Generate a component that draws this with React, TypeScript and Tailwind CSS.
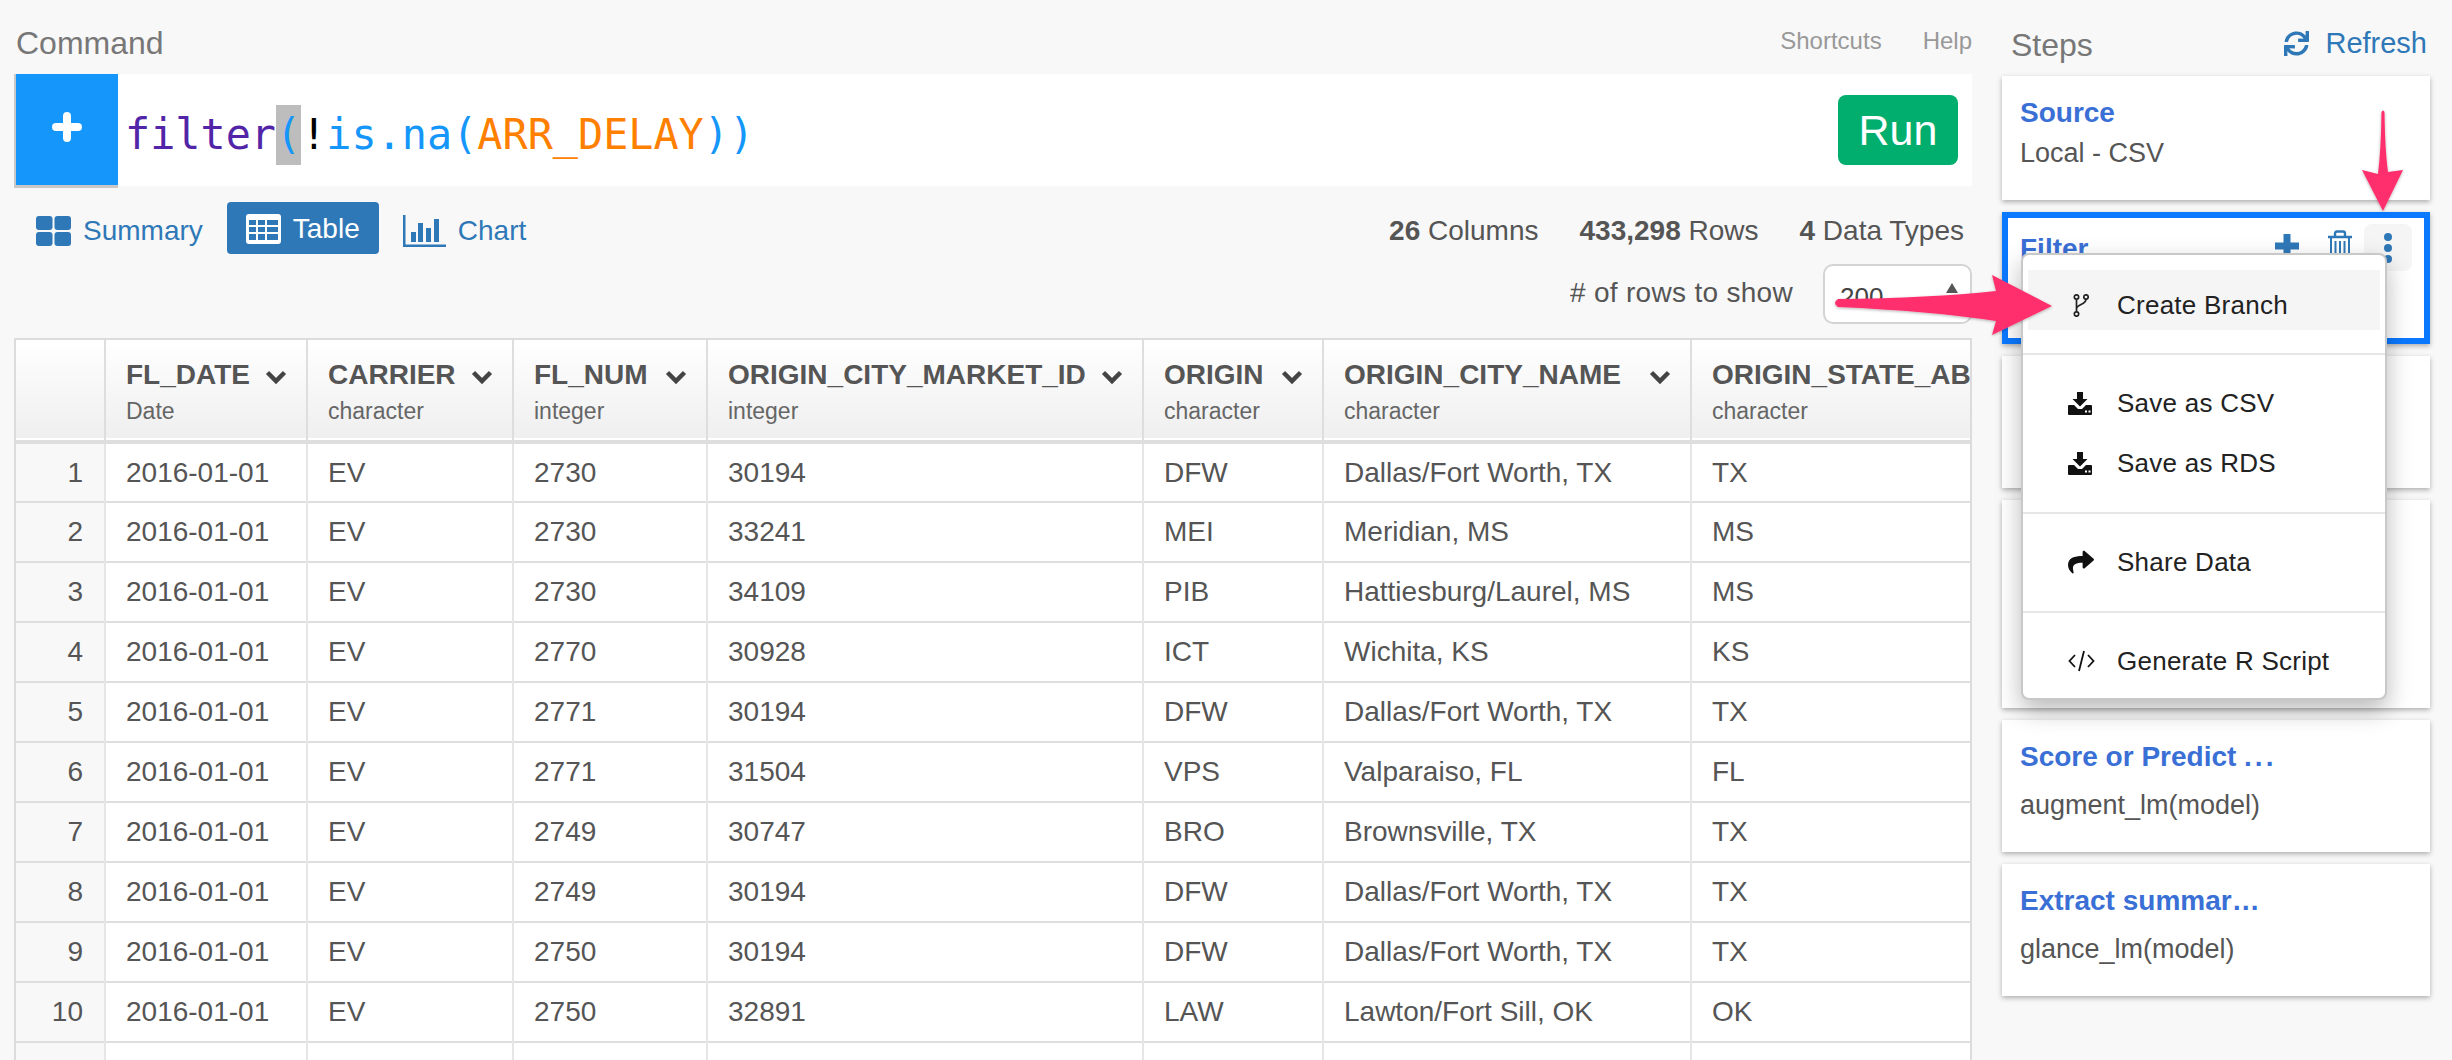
import React from "react";
import { FaSync, FaShare } from "react-icons/fa";

const SANS = "font-['Liberation_Sans',Arial,sans-serif]";
const columns = [
  { w: "w-[202px]", name: "FL_DATE", type: "Date" },
  { w: "w-[206px]", name: "CARRIER", type: "character" },
  { w: "w-[194px]", name: "FL_NUM", type: "integer" },
  { w: "w-[436px]", name: "ORIGIN_CITY_MARKET_ID", type: "integer" },
  { w: "w-[180px]", name: "ORIGIN", type: "character" },
  { w: "w-[368px]", name: "ORIGIN_CITY_NAME", type: "character" },
  { w: "w-[400px]", name: "ORIGIN_STATE_AB", type: "character" },
];
const rows = [
  ["2730", "30194", "DFW", "Dallas/Fort Worth, TX", "TX"],
  ["2730", "33241", "MEI", "Meridian, MS", "MS"],
  ["2730", "34109", "PIB", "Hattiesburg/Laurel, MS", "MS"],
  ["2770", "30928", "ICT", "Wichita, KS", "KS"],
  ["2771", "30194", "DFW", "Dallas/Fort Worth, TX", "TX"],
  ["2771", "31504", "VPS", "Valparaiso, FL", "FL"],
  ["2749", "30747", "BRO", "Brownsville, TX", "TX"],
  ["2749", "30194", "DFW", "Dallas/Fort Worth, TX", "TX"],
  ["2750", "30194", "DFW", "Dallas/Fort Worth, TX", "TX"],
  ["2750", "32891", "LAW", "Lawton/Fort Sill, OK", "OK"],
];

function Chevron() {
  return (
    <svg width="22" height="16" viewBox="0 0 22 16" className="shrink-0 mt-[4px]">
      <path d="M2.5 3.5 L11 12 L19.5 3.5" fill="none" stroke="#444" strokeWidth="4.5" />
    </svg>
  );
}
function SaveIcon() {
  return (
    <svg width="24" height="23" viewBox="0 0 24 23">
      <path d="M9 0h6v7h4.5L12 14.5 4.5 7H9z" fill="#111" />
      <path d="M1 13h5l4 4h4l4-4h5a1 1 0 0 1 1 1v8a1 1 0 0 1-1 1H1a1 1 0 0 1-1-1v-8a1 1 0 0 1 1-1z" fill="#111" />
      <rect x="17" y="18.5" width="2" height="2" fill="#fff" />
      <rect x="20.5" y="18.5" width="2" height="2" fill="#fff" />
    </svg>
  );
}
function MenuItem({ icon, label, active }: { icon: React.ReactNode; label: string; active?: boolean }) {
  return (
    <div className={`h-[60px] mx-[4px] flex items-center text-[26px] tracking-[0.25px] text-[#222] ${active ? "bg-[#f5f5f5] pt-[10px]" : ""}`}>
      <div className="w-[89px] pl-[40px] flex items-center shrink-0">{icon}</div>
      <span>{label}</span>
    </div>
  );
}
function Card({ title, sub, h, subGap }: { title?: React.ReactNode; sub?: string; h: string; subGap: string }) {
  return (
    <div className={`${h} bg-white shadow-[0_2px_5px_rgba(0,0,0,0.3)] px-[18px] pt-[21px]`}>
      {title && <div className="text-[28px] leading-[32px] font-bold text-[#3a6fd6]">{title}</div>}
      {sub && <div className={`${subGap} text-[27px] leading-[32px] text-[#555]`}>{sub}</div>}
    </div>
  );
}

export default function App() {
  return (
    <div className={`${SANS} relative w-[2452px] h-[1060px] overflow-hidden bg-[#f8f8f8] flex`}>
      <div className="ml-[14px] w-[1958px] shrink-0 flex flex-col">
        <div className="h-[74px] flex justify-between">
          <div className="ml-[2px] pt-[25px] text-[32px] leading-[36px] text-[#777]">Command</div>
          <div className="pt-[27px] flex gap-[41px] text-[24px] leading-[28px] text-[#999]">
            <span>Shortcuts</span>
            <span>Help</span>
          </div>
        </div>

        <div className="h-[112px] bg-white flex items-center">
          <div className="w-[104px] h-[114px] self-start shrink-0 bg-[#1496fa] border-l-2 border-b-[3px] border-[#c8c8c8] flex items-center justify-center">
            <svg width="30" height="30" viewBox="0 0 30 30" className="-mt-[5px]">
              <path d="M15 4v22M4 15h22" stroke="#fff" strokeWidth="8" strokeLinecap="round" />
            </svg>
          </div>
          <div className="ml-[7px] mt-[10px] text-[41.8px] leading-[60px] font-['DejaVu_Sans_Mono',monospace] whitespace-pre flex-1">
            <span className="text-[#5225a8]">filter</span>
            <span className="inline-block h-[60px] text-[#1496fa] bg-[#bdbdbd]">(</span>
            <span className="text-black">!</span>
            <span className="text-[#1496fa]">is.na(</span>
            <span className="text-[#ff8000]">ARR_DELAY</span>
            <span className="text-[#1496fa]">))</span>
          </div>
          <div className="mr-[14px] w-[120px] h-[70px] rounded-[8px] bg-[#02ae6e] text-white text-[43px] flex items-center justify-center">Run</div>
        </div>

        <div className="h-[152px] pt-[16px] pl-[22px] flex justify-between items-start">
          <div className="flex items-center text-[28px] text-[#2f78b7]">
            <div className="flex items-center gap-[12px] mt-[6px]">
              <svg width="35" height="30" viewBox="0 0 35 30">
                <rect x="0" y="0" width="16.5" height="14" rx="3" fill="#2f78b7" />
                <rect x="18.5" y="0" width="16.5" height="14" rx="3" fill="#2f78b7" />
                <rect x="0" y="16" width="16.5" height="14" rx="3" fill="#2f78b7" />
                <rect x="18.5" y="16" width="16.5" height="14" rx="3" fill="#2f78b7" />
              </svg>
              <span>Summary</span>
            </div>
            <div className="ml-[24px] w-[152px] h-[52px] pt-[1px] rounded-[4px] bg-[#2f78b7] text-white flex items-center pl-[19px] gap-[12px]">
              <svg width="35" height="30" viewBox="0 0 35 30">
                <rect x="0" y="0" width="35" height="30" rx="3" fill="#fff" />
                <g fill="#2f78b7">
                  <rect x="3" y="6" width="7" height="5" /><rect x="12" y="6" width="7" height="5" /><rect x="21" y="6" width="11" height="5" />
                  <rect x="3" y="13" width="7" height="5" /><rect x="12" y="13" width="7" height="5" /><rect x="21" y="13" width="11" height="5" />
                  <rect x="3" y="20" width="7" height="6" /><rect x="12" y="20" width="7" height="6" /><rect x="21" y="20" width="11" height="6" />
                </g>
              </svg>
              <span>Table</span>
            </div>
            <div className="ml-[24px] flex items-center gap-[12px] mt-[6px]">
              <svg width="43" height="32" viewBox="0 0 43 32" fill="#2f78b7">
                <rect x="0" y="0" width="2.5" height="32" />
                <rect x="0" y="29.5" width="43" height="2.5" />
                <rect x="8" y="17" width="5" height="10" />
                <rect x="15" y="8" width="5" height="19" />
                <rect x="23" y="13" width="5" height="14" />
                <rect x="31" y="4" width="5" height="23" />
              </svg>
              <span>Chart</span>
            </div>
          </div>
          <div className="flex flex-col items-end text-[28px] text-[#555]">
            <div className="h-[52px] pt-[6px] flex items-center gap-[41px] mr-[8px]">
              <span><b>26</b> Columns</span>
              <span><b>433,298</b> Rows</span>
              <span><b>4</b> Data Types</span>
            </div>
            <div className="mt-[10px] flex items-center">
              <span className="text-[28px] tracking-[0.3px] mr-[30px] -mt-[3px]">{"# of rows to show"}</span>
              <div className="relative w-[149px] h-[60px] rounded-[10px] border-2 border-[#d4d4d4] bg-white text-[26px] pl-[15px] pt-[12px] text-[#444]">
                200
                <svg width="12" height="10" viewBox="0 0 12 10" className="absolute right-[12px] top-[17px]">
                  <path d="M6 0 12 10H0z" fill="#555" />
                </svg>
              </div>
            </div>
          </div>
        </div>

        <div className="flex-1 overflow-hidden border-t-2 border-r-2 border-l-2 border-[#dcdcdc]">
          <table className="table-fixed border-collapse w-[2075px] text-[#555]">
            <colgroup>
              <col className="w-[89px]" />
              {columns.map((c) => (
                <col key={c.name} className={c.w} />
              ))}
            </colgroup>
            <thead>
              <tr className="h-[102px] bg-gradient-to-b from-[#ffffff] to-[#efefef] border-b-[4px] border-[#dedede]">
                <th className="border-r-2 border-[#dedede]" />
                {columns.map((c) => (
                  <th key={c.name} className="border-r-2 border-[#dedede] pl-[20px] pr-[19px] text-left align-top pt-[17px] font-normal">
                    <div className="flex items-center justify-between h-[36px] text-[28px] font-bold whitespace-nowrap overflow-hidden">
                      <span>{c.name}</span>
                      <Chevron />
                    </div>
                    <div className="text-[23px] leading-[36px] text-[#666]">{c.type}</div>
                  </th>
                ))}
              </tr>
            </thead>
            <tbody className="bg-white text-[28px]">
              {rows.map((r, i) => (
                <tr key={i} className="h-[60px] border-b-2 border-[#dedede]">
                  <td className="bg-[#f8f8f8] border-r-2 border-[#e6e6e6] text-right pr-[21px]">{i + 1}</td>
                  <td className="border-r-2 border-[#e6e6e6] pl-[20px]">2016-01-01</td>
                  <td className="border-r-2 border-[#e6e6e6] pl-[20px]">EV</td>
                  {r.map((v, j) => (
                    <td key={j} className="border-r-2 border-[#e6e6e6] pl-[20px] whitespace-nowrap">{v}</td>
                  ))}
                </tr>
              ))}
              <tr className="h-[60px]">
                <td className="bg-[#f8f8f8] border-r-2 border-[#e6e6e6]" />
                {columns.map((c) => (
                  <td key={c.name} className="border-r-2 border-[#e6e6e6]" />
                ))}
              </tr>
            </tbody>
          </table>
        </div>
      </div>

      <div className="ml-[30px] w-[428px] shrink-0 flex flex-col">
        <div className="h-[76px] pl-[9px] pt-[25px] flex justify-between text-[32px] leading-[40px]">
          <span className="text-[#777]">Steps</span>
          <span className="flex items-center h-[36px] gap-[16px] text-[29px] text-[#2f78b7] mr-[3px]">
            <FaSync size={25} />
            <span>Refresh</span>
          </span>
        </div>
        <div className="flex flex-col gap-[12px]">
          <Card title="Source" sub="Local - CSV" h="h-[124px]" subGap="mt-[8px]" />
          <div className="relative z-10 h-[132px] bg-white border-[6px] border-[#0a78ff] shadow-[0_2px_5px_rgba(0,0,0,0.3)] pl-[12px] pt-[15px]">
            <div className="text-[28px] leading-[32px] font-bold text-[#3a6fd6]">Filter</div>
            <div className="absolute left-[267px] top-[16px]">
              <svg width="24" height="24" viewBox="0 0 24 24">
                <path d="M12 1v22M1 12h22" stroke="#2f78b7" strokeWidth="7" strokeLinecap="round" />
              </svg>
            </div>
            <div className="absolute left-[320px] top-[12px]">
              <svg width="24" height="32" viewBox="0 0 24 32" fill="none" stroke="#2f78b7" strokeWidth="2">
                <path d="M0 7h24M7 7V3.5q0-2 2-2h6q2 0 2 2V7" strokeWidth="2.4" />
                <path d="M3 7v22h18V7M7.5 11v16M12 11v16M16.500 11v16" />
              </svg>
            </div>
            <div className="absolute left-[356px] top-[6px] w-[48px] h-[47px] rounded-[8px] bg-[#f5f5f5] flex flex-col items-center pt-[9px] gap-[3px]">
              <span className="w-[8px] h-[8px] rounded-full bg-[#2f78b7]" />
              <span className="w-[8px] h-[8px] rounded-full bg-[#2f78b7]" />
              <span className="w-[8px] h-[8px] rounded-full bg-[#2f78b7]" />
            </div>
            <div className="absolute left-[13px] top-[35px] w-[366px] h-[447px] rounded-[8px] bg-white border-2 border-[#c8c8c8] shadow-[0_10px_24px_rgba(0,0,0,0.28)] pt-[15px] pl-[1px] pr-[1px]">
              <MenuItem
                active
                label="Create Branch"
                icon={
                  <svg width="16" height="23" viewBox="0 0 16 23" className="ml-[5px]" fill="none" stroke="#222" strokeWidth="1.7">
                    <circle cx="3.500" cy="3" r="2.2" />
                    <circle cx="13" cy="3" r="2.2" />
                    <circle cx="3.500" cy="20" r="2.200" />
                    <path d="M3.500 5.200V17.800M13 5.200C13 11 3.500 10 3.500 15" />
                  </svg>
                }
              />
              <div className="-mx-[1px] mt-[23px] mb-[18px] h-[2px] bg-[#e6e6e6]" />
              <MenuItem label="Save as CSV" icon={<SaveIcon />} />
              <MenuItem label="Save as RDS" icon={<SaveIcon />} />
              <div className="-mx-[1px] mt-[19px] mb-[18px] h-[2px] bg-[#e6e6e6]" />
              <MenuItem label="Share Data" icon={<FaShare size={26} color="#111" />} />
              <div className="-mx-[1px] mt-[19px] mb-[18px] h-[2px] bg-[#e6e6e6]" />
              <MenuItem
                label="Generate R Script"
                icon={
                  <svg width="27" height="22" viewBox="0 0 27 22" fill="none" stroke="#111" strokeWidth="1.8">
                    <path d="M7 5 1.500 11 7 17M20 5l5.500 6L20 17M16 1 11 21" />
                  </svg>
                }
              />
            </div>
          </div>
          <Card h="h-[132px]" subGap="" />
          <Card h="h-[208px]" subGap="" />
          <Card title={<>Score or Predict <span className="tracking-[3px]">...</span></>} sub="augment_lm(model)" h="h-[132px]" subGap="mt-[16px]" />
          <Card title="Extract summar…" sub="glance_lm(model)" h="h-[132px]" subGap="mt-[16px]" />
        </div>
      </div>

      <svg className="absolute left-0 top-0 z-20 pointer-events-none" width="2452" height="1060" viewBox="0 0 2452 1060">
        <defs>
          <filter id="arrowShadow" x="-20%" y="-20%" width="140%" height="140%">
            <feDropShadow dx="0" dy="1" stdDeviation="1.5" floodColor="#000" floodOpacity="0.3" />
          </filter>
        </defs>
        <g fill="#ff2f6d" filter="url(#arrowShadow)">
          <path d="M1838 299 Q1930 298 1996 291 L1992 275 L2052 306 L1992 335 L1996 321 Q1930 311 1838 307 Q1832 303 1838 299z" />
          <path d="M2381.500 112 Q2383 109 2384.500 112 Q2385 150 2388 172 L2403 170 L2383 211 L2362 170 L2378 174 Q2381 150 2381.500 112z" />
        </g>
      </svg>
    </div>
  );
}
